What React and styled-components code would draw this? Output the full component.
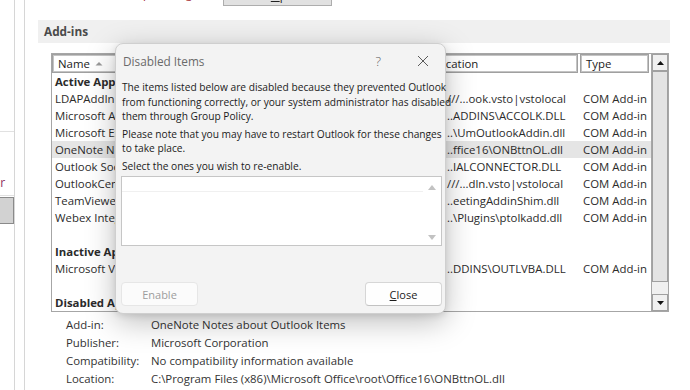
import React from 'react';
import styled, { createGlobalStyle } from 'styled-components';

const GlobalStyle = createGlobalStyle`
    html, body {
        margin: 0;
        padding: 0;
        background: #fff;
    }

    body {
        font-family: "Open Sans", "Noto Sans", sans-serif;
        width: 690px;
        height: 390px;
        overflow: hidden;
    }
`;

const addins = [
    { group: 'Active Application Add-ins' },
    { name: 'LDAPAddIn', location: '///...ook.vsto|vstolocal' },
    { name: 'Microsoft Access Outlook Add-in for Data Collection', location: '..ADDINS\\ACCOLK.DLL' },
    { name: 'Microsoft Exchange Add-in', location: '..\\UmOutlookAddin.dll' },
    { name: 'OneNote Notes about Outlook Items', location: '..ffice16\\ONBttnOL.dll', selected: true },
    { name: 'Outlook Social Connector 2016', location: '..IALCONNECTOR.DLL' },
    { name: 'OutlookCenterAddin', location: '///...dln.vsto|vstolocal' },
    { name: 'TeamViewer Meeting Add-In', location: '..eetingAddinShim.dll' },
    { name: 'Webex Integration for Outlook', location: '..\\Plugins\\ptolkadd.dll' },
    { blank: true },
    { group: 'Inactive Application Add-ins' },
    { name: 'Microsoft VBA for Outlook Addin', location: '..DDINS\\OUTLVBA.DLL' },
    { blank: true },
    { group: 'Disabled Application Add-ins' },
];

const details = [
    ['Add-in:', 'OneNote Notes about Outlook Items'],
    ['Publisher:', 'Microsoft Corporation'],
    ['Compatibility:', 'No compatibility information available'],
    ['Location:', 'C:\\Program Files (x86)\\Microsoft Office\\root\\Office16\\ONBttnOL.dll'],
];

const App = () => {
    return (
        <>
            <GlobalStyle />
            <Page>
                <NavPane>
                    <NavList>
                        <NavDivider />
                        <NavItem $h={38}>Customize Ribbon</NavItem>
                        <NavItem $h={25}>Quick Access Toolbar</NavItem>
                        <NavDivider />
                        <NavItem $h={27} $selected>Add-ins</NavItem>
                        <NavItem $h={27}>Trust Center</NavItem>
                    </NavList>
                </NavPane>

                <MainPane>
                    <TopRow>
                        <TopLabel>Outlook Startup loading:</TopLabel>
                        <TopButton>Add-in <u>O</u>ptions...</TopButton>
                    </TopRow>

                    <SectionBand>Add-ins</SectionBand>

                    <ListView>
                        <ListBody>
                            <HeaderRow>
                                <HeaderCell>
                                    Name
                                    <SortArrow width="8" height="5" viewBox="0 0 8 5">
                                        <path d="M0.5 4.5 L4 1 L7.5 4.5 Z" fill="#9a9a9a" />
                                    </SortArrow>
                                </HeaderCell>
                                <HeaderCell $pad={6}>Location</HeaderCell>
                                <HeaderCell>Type</HeaderCell>
                            </HeaderRow>
                            {addins.map((a, i) => (
                                <Row key={i} $selected={a.selected}>
                                    {a.group ? (
                                        <GroupCell>{a.group}</GroupCell>
                                    ) : a.blank ? null : (
                                        <>
                                            <Cell>{a.name}</Cell>
                                            <Cell $pad={21}>{a.location}</Cell>
                                            <Cell>COM Add-in</Cell>
                                        </>
                                    )}
                                </Row>
                            ))}
                        </ListBody>
                        <ScrollBar>
                            <ScrollButton>
                                <svg width="7" height="4" viewBox="0 0 7 4"><path d="M0 4 L3.5 0 L7 4 Z" fill="#111" /></svg>
                            </ScrollButton>
                            <ScrollThumb />
                            <ScrollTrack />
                            <ScrollButton>
                                <svg width="7" height="4" viewBox="0 0 7 4"><path d="M0 0 L3.5 4 L7 0 Z" fill="#111" /></svg>
                            </ScrollButton>
                        </ScrollBar>
                    </ListView>

                    <DetailGrid>
                        {details.map(([k, v]) => (
                            <React.Fragment key={k}>
                                <DetailLabel>{k}</DetailLabel>
                                <DetailValue>{v}</DetailValue>
                            </React.Fragment>
                        ))}
                    </DetailGrid>
                </MainPane>

                <Dialog>
                    <TitleBar>
                        <Title>Disabled Items</Title>
                        <TitleButtons>
                            <HelpGlyph>?</HelpGlyph>
                            <CloseGlyph width="12" height="12" viewBox="0 0 12 12">
                                <path d="M1 1 L11 11 M11 1 L1 11" stroke="#5a5a5a" strokeWidth="1" />
                            </CloseGlyph>
                        </TitleButtons>
                    </TitleBar>
                    <DialogBody>
                        <Para>
                            The items listed below are disabled because they prevented Outlook<br />
                            from functioning correctly, or your system administrator has disabled<br />
                            them through Group Policy.
                        </Para>
                        <Para>
                            Please note that you may have to restart Outlook for these changes<br />
                            to take place.
                        </Para>
                        <Para>Select the ones you wish to re-enable.</Para>
                        <ItemBox>
                            <ItemBoxLine />
                            <BoxArrows>
                                <svg width="8" height="5" viewBox="0 0 8 5"><path d="M0 5 L4 0 L8 5 Z" fill="#c2c2c2" /></svg>
                                <svg width="8" height="5" viewBox="0 0 8 5"><path d="M0 0 L4 5 L8 0 Z" fill="#c2c2c2" /></svg>
                            </BoxArrows>
                        </ItemBox>
                        <ButtonRow>
                            <DialogButton disabled>Enable</DialogButton>
                            <DialogButton><u>C</u>lose</DialogButton>
                        </ButtonRow>
                    </DialogBody>
                </Dialog>
            </Page>
        </>
    );
};

export default App;

const Page = styled.div`
    display: flex;
    width: 690px;
    height: 390px;
    position: relative;
    overflow: hidden;
    color: #333;
`;

const NavPane = styled.div`
    width: 14px;
    flex: none;
    border-right: 1px solid #d6d6d6;
    overflow: hidden;
    display: flex;
    justify-content: flex-end;
`;

const NavList = styled.div`
    width: 139px;
    flex: none;
    padding-top: 131px;
    display: flex;
    flex-direction: column;
`;

const NavDivider = styled.div`
    height: 1px;
    background: #e1e1e1;
`;

const NavItem = styled.div`
    height: ${p => p.$h}px;
    box-sizing: border-box;
    display: flex;
    align-items: center;
    padding-left: 12px;
    font-size: 12px;
    white-space: nowrap;
    color: #8e2f5c;
    margin-top: ${p => (p.$selected ? '1px' : '0')};
    background: ${p => (p.$selected ? '#d2d2d2' : 'transparent')};
    border: ${p => (p.$selected ? '1px solid #8a8a8a' : 'none')};
`;

const MainPane = styled.div`
    flex: none;
    width: 656px;
    margin-left: 9px;
    border-left: 1px solid #d6d6d6;
    border-right: 1px solid #d6d6d6;
    padding: 0 11px 0 13px;
    box-sizing: content-box;
    display: flex;
    flex-direction: column;
`;

const TopRow = styled.div`
    height: 20px;
    overflow: hidden;
    display: grid;
    grid-template-columns: 167px 109px;
    column-gap: 18px;
    align-items: start;
`;

const TopLabel = styled.div`
    margin-top: -14px;
    font-size: 11.4px;
    line-height: 16px;
    color: #a4262c;
    white-space: nowrap;
    text-align: right;
    padding-right: 10px;
`;

const TopButton = styled.div`
    margin-top: -14px;
    height: 20px;
    box-sizing: border-box;
    border: 1px solid #adadad;
    background: #e1e1e1;
    font-size: 11.4px;
    line-height: 18px;
    text-align: center;
    color: #222;
    white-space: nowrap;
`;

const SectionBand = styled.div`
    height: 23px;
    width: 632px;
    background: #f0f0f0;
    padding-left: 6px;
    box-sizing: border-box;
    font-size: 11.8px;
    font-weight: 700;
    line-height: 23px;
    color: #4a4a4a;
`;

const ListView = styled.div`
    margin: 10px 0 0 13px;
    width: 618px;
    height: 259px;
    box-sizing: border-box;
    border: 1px solid #a6a6a6;
    display: grid;
    grid-template-columns: 1fr 17px;
    overflow: hidden;
`;

const columns = '374px 154px 71px';

const ListBody = styled.div`
    display: flex;
    flex-direction: column;
`;

const HeaderRow = styled.div`
    display: grid;
    grid-template-columns: ${columns};
    height: 19px;
`;

const HeaderCell = styled.div`
    box-sizing: border-box;
    border: 1px solid #a0a0a0;
    box-shadow: inset 1px 1px 0 #c4c4c4, inset -1px -1px 0 #c4c4c4;
    margin-right: 2px;
    padding-left: ${p => p.$pad || 5}px;
    font-size: 11.4px;
    line-height: 17px;
    color: #222;
    display: flex;
    align-items: center;
    gap: 5px;
    white-space: nowrap;
`;

const SortArrow = styled.svg`
    display: block;
`;

const Row = styled.div`
    display: grid;
    grid-template-columns: ${columns};
    height: 17px;
    background: ${p => (p.$selected ? '#e5e5e5' : 'transparent')};
`;

const Cell = styled.div`
    padding-left: ${p => p.$pad || 3}px;
    font-size: 11.4px;
    line-height: 17px;
    color: #2b2b2b;
    white-space: nowrap;
    overflow: hidden;
`;

const GroupCell = styled.div`
    grid-column: 1 / -1;
    padding-left: 3px;
    font-size: 11.4px;
    font-weight: 700;
    line-height: 17px;
    color: #2b2b2b;
`;

const ScrollBar = styled.div`
    display: flex;
    flex-direction: column;
    border-left: 1px solid #a6a6a6;
    background: #f0f0f0;
`;

const ScrollButton = styled.div`
    height: 17px;
    flex: none;
    box-sizing: border-box;
    border: 1px solid #a0a0a0;
    background: #f0f0f0;
    display: flex;
    align-items: center;
    justify-content: center;
`;

const ScrollThumb = styled.div`
    height: 211px;
    flex: none;
    box-sizing: border-box;
    border: 1px solid #a0a0a0;
    background: #e3e3e3;
`;

const ScrollTrack = styled.div`
    flex: 1;
`;

const DetailGrid = styled.div`
    margin: 4px 0 0 28px;
    display: grid;
    grid-template-columns: 85px 1fr;
    grid-auto-rows: 18px;
    font-size: 11.4px;
    line-height: 18px;
    color: #333;
`;

const DetailLabel = styled.div`
    white-space: nowrap;
`;

const DetailValue = styled.div`
    white-space: nowrap;
`;

const Dialog = styled.div`
    position: absolute;
    left: 115px;
    top: 43px;
    width: 331px;
    height: 271px;
    box-sizing: border-box;
    border: 1px solid #cfcfcf;
    border-radius: 8px;
    background: #f3f3f3;
    box-shadow: 0 8px 30px rgba(0, 0, 0, 0.26), 0 2px 6px rgba(0, 0, 0, 0.1);
    display: flex;
    flex-direction: column;
`;

const TitleBar = styled.div`
    height: 34px;
    flex: none;
    display: flex;
    align-items: center;
    justify-content: space-between;
    padding: 0 16px 0 7px;
`;

const Title = styled.div`
    font-size: 11.8px;
    color: #6a6a6a;
`;

const TitleButtons = styled.div`
    display: flex;
    align-items: center;
    gap: 36px;
`;

const HelpGlyph = styled.div`
    font-size: 13px;
    font-weight: 300;
    color: #5a5a5a;
`;

const CloseGlyph = styled.svg`
    display: block;
`;

const DialogBody = styled.div`
    flex: 1;
    display: flex;
    flex-direction: column;
    padding: 2px 3px 7px 5px;
`;

const Para = styled.p`
    margin: 0 0 3px;
    padding-left: 1px;
    font-size: 10.2px;
    line-height: 14.5px;
    color: #1b1b1b;
    white-space: nowrap;
`;

const ItemBox = styled.div`
    height: 70px;
    box-sizing: border-box;
    border: 1px solid #c6c6c6;
    background: #fff;
    position: relative;
`;

const ItemBoxLine = styled.div`
    height: 14px;
    border-bottom: 1px solid #f0f0f0;
    margin-right: 18px;
`;

const BoxArrows = styled.div`
    position: absolute;
    right: 5px;
    top: 8px;
    bottom: 5px;
    display: flex;
    flex-direction: column;
    justify-content: space-between;
`;

const ButtonRow = styled.div`
    margin-top: auto;
    display: flex;
    justify-content: space-between;
`;

const DialogButton = styled.button`
    width: 77px;
    height: 24px;
    border-radius: 4px;
    font-family: inherit;
    font-size: 11px;
    border: 1px solid ${p => (p.disabled ? '#e6e6e6' : '#d6d6d6')};
    border-bottom-color: ${p => (p.disabled ? '#e6e6e6' : '#c2c2c2')};
    background: ${p => (p.disabled ? '#fbfbfb' : '#fefefe')};
    color: ${p => (p.disabled ? '#9d9d9d' : '#1b1b1b')};
    padding: 0;
`;
